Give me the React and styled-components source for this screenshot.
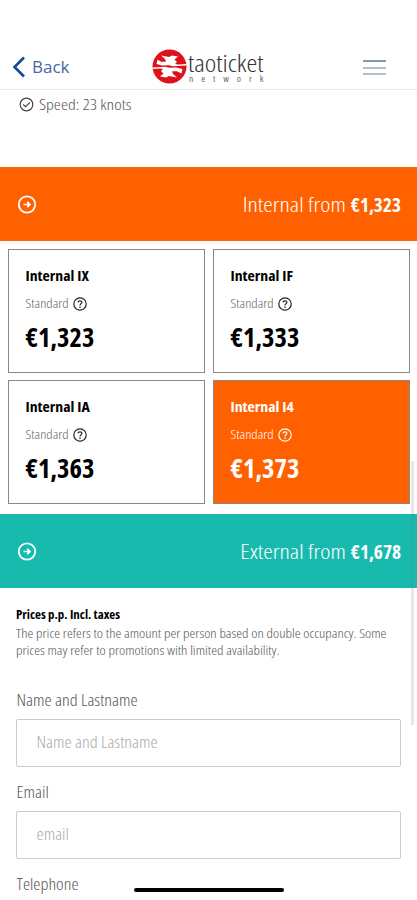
import React from "react";
import styled, { createGlobalStyle } from "styled-components";

const cabins = [
  { name: "Internal IX", price: "€1,323" },
  { name: "Internal IF", price: "€1,333" },
  { name: "Internal IA", price: "€1,363" },
  { name: "Internal I4", price: "€1,373", selected: true },
];

export default function App() {
  return (
    <>
      <GlobalStyle />
      <Screen>
        <Header>
          <BackButton>
            <svg width="14" height="22" viewBox="0 0 14 22" fill="none">
              <path d="M12 1.5L2.5 11L12 20.5" stroke="#15499c" strokeWidth="2.6" />
            </svg>
            <Text $size={17} $stretch={100} $color="#4468a6">Back</Text>
          </BackButton>
          <Brand>
            <LogoMark />
            <BrandName>
              <Text $size={27.5} $weight={300} $squash={0.84} $color="#333">taoticket</Text>
              <Network>network</Network>
            </BrandName>
          </Brand>
          <Burger>
            <BurgerLine $color="#8798b3" />
            <BurgerLine />
            <BurgerLine />
          </Burger>
        </Header>

        <Speed>
          <svg width="15" height="15" viewBox="0 0 15 15" fill="none" stroke="#444" strokeWidth="1.2">
            <circle cx="7.5" cy="7.5" r="6.3" />
            <path d="M4.2 7.5L6.6 9.7L11 5.3" />
          </svg>
          <Text $size={17.8} $weight={300} $squash={0.82} $color="#555">Speed: 23 knots</Text>
        </Speed>

        <Band $color="#ff6000">
          <ArrowIcon />
          <BandTitle>
            <Text $size={24.2} $weight={300} $squash={0.84}>Internal from</Text>
            <Text $size={19.3} $weight={700} $squash={1.04}>€1,323</Text>
          </BandTitle>
        </Band>

        <Cabins>
          {cabins.map((cabin) => (
            <Cabin key={cabin.name} $selected={cabin.selected}>
              <CabinName>
                <Text $size={15.8} $weight={700} $squash={0.95}>{cabin.name}</Text>
              </CabinName>
              <CabinType $selected={cabin.selected}>
                <Text $size={14.5} $weight={300} $squash={0.85}>Standard</Text>
                <HelpIcon color={cabin.selected ? "#fff" : "#222"} />
              </CabinType>
              <CabinPrice>
                <Text $size={26.5} $weight={700}>{cabin.price}</Text>
              </CabinPrice>
            </Cabin>
          ))}
        </Cabins>

        <Band $color="#18baae">
          <ArrowIcon />
          <BandTitle>
            <Text $size={24.2} $weight={300} $squash={0.84}>External from</Text>
            <Text $size={19.3} $weight={700} $squash={1.04}>€1,678</Text>
          </BandTitle>
        </Band>

        <Notes>
          <Text $size={12.9} $weight={700} $squash={0.95} $color="#000">Prices p.p. Incl. taxes</Text>
          <Text $size={14.75} $weight={300} $squash={0.84} $color="#555">
            The price refers to the amount per person based on double occupancy. Some
          </Text>
          <Text $size={14.75} $weight={300} $squash={0.84} $color="#555">
            prices may refer to promotions with limited availability.
          </Text>
        </Notes>

        <Form>
          <Label><FormText $color="#555">Name and Lastname</FormText></Label>
          <Field><FormText $color="#aaa">Name and Lastname</FormText></Field>
          <Label><FormText $color="#555">Email</FormText></Label>
          <Field><FormText $color="#aaa">email</FormText></Field>
          <Label><FormText $color="#555">Telephone</FormText></Label>
        </Form>
        <ScrollThumb />
        <HomeBar />
      </Screen>
    </>
  );
}

function FormText({ $color, children }) {
  return (
    <Text $size={18.1} $weight={300} $squash={0.87} $color={$color}>
      {children}
    </Text>
  );
}

function LogoMark() {
  return (
    <svg width="35" height="35" viewBox="0 0 35 35">
      <circle cx="17.5" cy="17.5" r="17" fill="#df1119" />
      <g fill="#fff">
        <path d="M9 6.5L17 8L20 6.5L26 7.5L22.5 10.5L25 13L23 15L26 15.6L34.5 15V16.6L21 17.2L17 16.3L10 16.5L4.5 15L5.5 10.5L9 12.8H14L13 10Z" />
        <path d="M25 28.5L17 27L14 28.5L8 27.5L11.5 24.5L9 22L11 20L8 19.4L0.5 20V18.4L13 17.8L17 18.7L24 18.5L30.5 20L29.5 24.5L25 22.2H20L21 25Z" />
      </g>
    </svg>
  );
}

function ArrowIcon() {
  return (
    <svg width="20" height="20" viewBox="0 0 20 20" fill="none" stroke="#fff">
      <circle cx="10" cy="10.5" r="8.2" strokeWidth="1.8" />
      <path d="M6.5 10.5H13M10.2 7.8L12.9 10.5L10.2 13.2" strokeWidth="1.7" />
    </svg>
  );
}

function HelpIcon({ color }) {
  return (
    <svg width="14" height="14" viewBox="0 0 14 14" fill="none" stroke={color} strokeWidth="1.2">
      <circle cx="7" cy="7" r="6.2" />
      <path d="M5 5.4C5.2 3.3 9 3.4 8.9 5.5C8.8 6.8 7 6.8 7 8.4M7 9.6V10.9" />
    </svg>
  );
}

const GlobalStyle = createGlobalStyle`
  body {
    margin: 0;
    background: #fff;
  }
  * {
    box-sizing: border-box;
  }
`;

const Screen = styled.div`
  position: relative;
  width: 417px;
  height: 900px;
  overflow: hidden;
  background: #fff;
  font-family: "Open Sans", "Noto Sans", sans-serif;
`;

const Text = styled.span`
  display: block;
  white-space: nowrap;
  font-size: ${(p) => p.$size}px;
  font-weight: ${(p) => p.$weight || 400};
  font-stretch: ${(p) => p.$stretch || 75}%;
  color: ${(p) => p.$color || "inherit"};
  transform: scaleY(${(p) => p.$squash || 1});
  transform-origin: 0 calc(50% + 0.36em);
`;

const Header = styled.header`
  height: 90px;
  padding: 44px 31px 0 12px;
  display: flex;
  align-items: center;
  justify-content: space-between;
  border-bottom: 1px solid #e8e8e8;
`;

const BackButton = styled.div`
  width: 140px;
  display: flex;
  align-items: center;
  gap: 6px;
`;

const Brand = styled.div`
  display: flex;
  flex: 1;
`;

const BrandName = styled.div`
  padding-left: 1px;
  line-height: 26px;
`;

const Network = styled.div`
  padding-left: 1px;
  font-size: 9.5px;
  line-height: 8px;
  letter-spacing: 7.9px;
  font-stretch: 75%;
  color: #666;
`;

const Burger = styled.div`
  width: 23px;
  padding-top: 2px;
  display: flex;
  flex-direction: column;
  gap: 4.5px;
`;

const BurgerLine = styled.span`
  height: 2px;
  background: ${(p) => p.$color || "#b3bfd1"};
`;

const Speed = styled.div`
  height: 77px;
  padding: 4px 0 0 19px;
  display: flex;
  align-items: flex-start;
  gap: 5px;
  line-height: 18px;

  svg {
    margin-top: 3px;
  }
`;

const Band = styled.section`
  height: 74px;
  padding: 0 16px 0 17px;
  display: flex;
  align-items: center;
  justify-content: space-between;
  color: #fff;
  background: ${(p) => p.$color};
`;

const BandTitle = styled.div`
  margin-top: -4px;
  display: flex;
  align-items: baseline;
  gap: 5px;
`;

const Cabins = styled.div`
  height: 273px;
  padding: 8px 7px 0 8px;
  display: grid;
  grid-template-columns: 197px 197px;
  grid-auto-rows: 124px;
  gap: 7px 8px;
`;

const Cabin = styled.div`
  padding: 15px 0 0 16.5px;
  border: 1px solid #888;
  color: ${(p) => (p.$selected ? "#fff" : "#000")};
  background: ${(p) => (p.$selected ? "#ff6000" : "#fff")};
`;

const CabinName = styled.div`
  line-height: 21px;
`;

const CabinType = styled.div`
  height: 19px;
  margin-top: 8px;
  display: flex;
  align-items: flex-start;
  gap: 4px;
  line-height: 17px;
  color: ${(p) => (p.$selected ? "#fff" : "#666")};

  svg {
    margin-top: 3px;
  }
`;

const CabinPrice = styled.div`
  margin-top: 7px;
  line-height: 34px;
`;

const Notes = styled.div`
  height: 101px;
  padding: 18px 16px 0;
  line-height: 17.5px;
`;

const Form = styled.div`
  padding: 0 16px;
`;

const Label = styled.div`
  height: 30px;
  padding-left: 0.5px;
  line-height: 20px;
`;

const Field = styled.div`
  height: 48px;
  margin-bottom: 14px;
  padding-left: 19.5px;
  border: 1px solid #ccc;
  border-radius: 2px;
  line-height: 42px;
`;

const ScrollThumb = styled.div`
  position: absolute;
  top: 461px;
  left: 411px;
  width: 3px;
  height: 264px;
  background: rgba(120, 120, 120, 0.18);
`;

const HomeBar = styled.div`
  position: absolute;
  top: 888px;
  left: 134px;
  width: 150px;
  height: 4px;
  border-radius: 2px;
  background: #000;
`;
